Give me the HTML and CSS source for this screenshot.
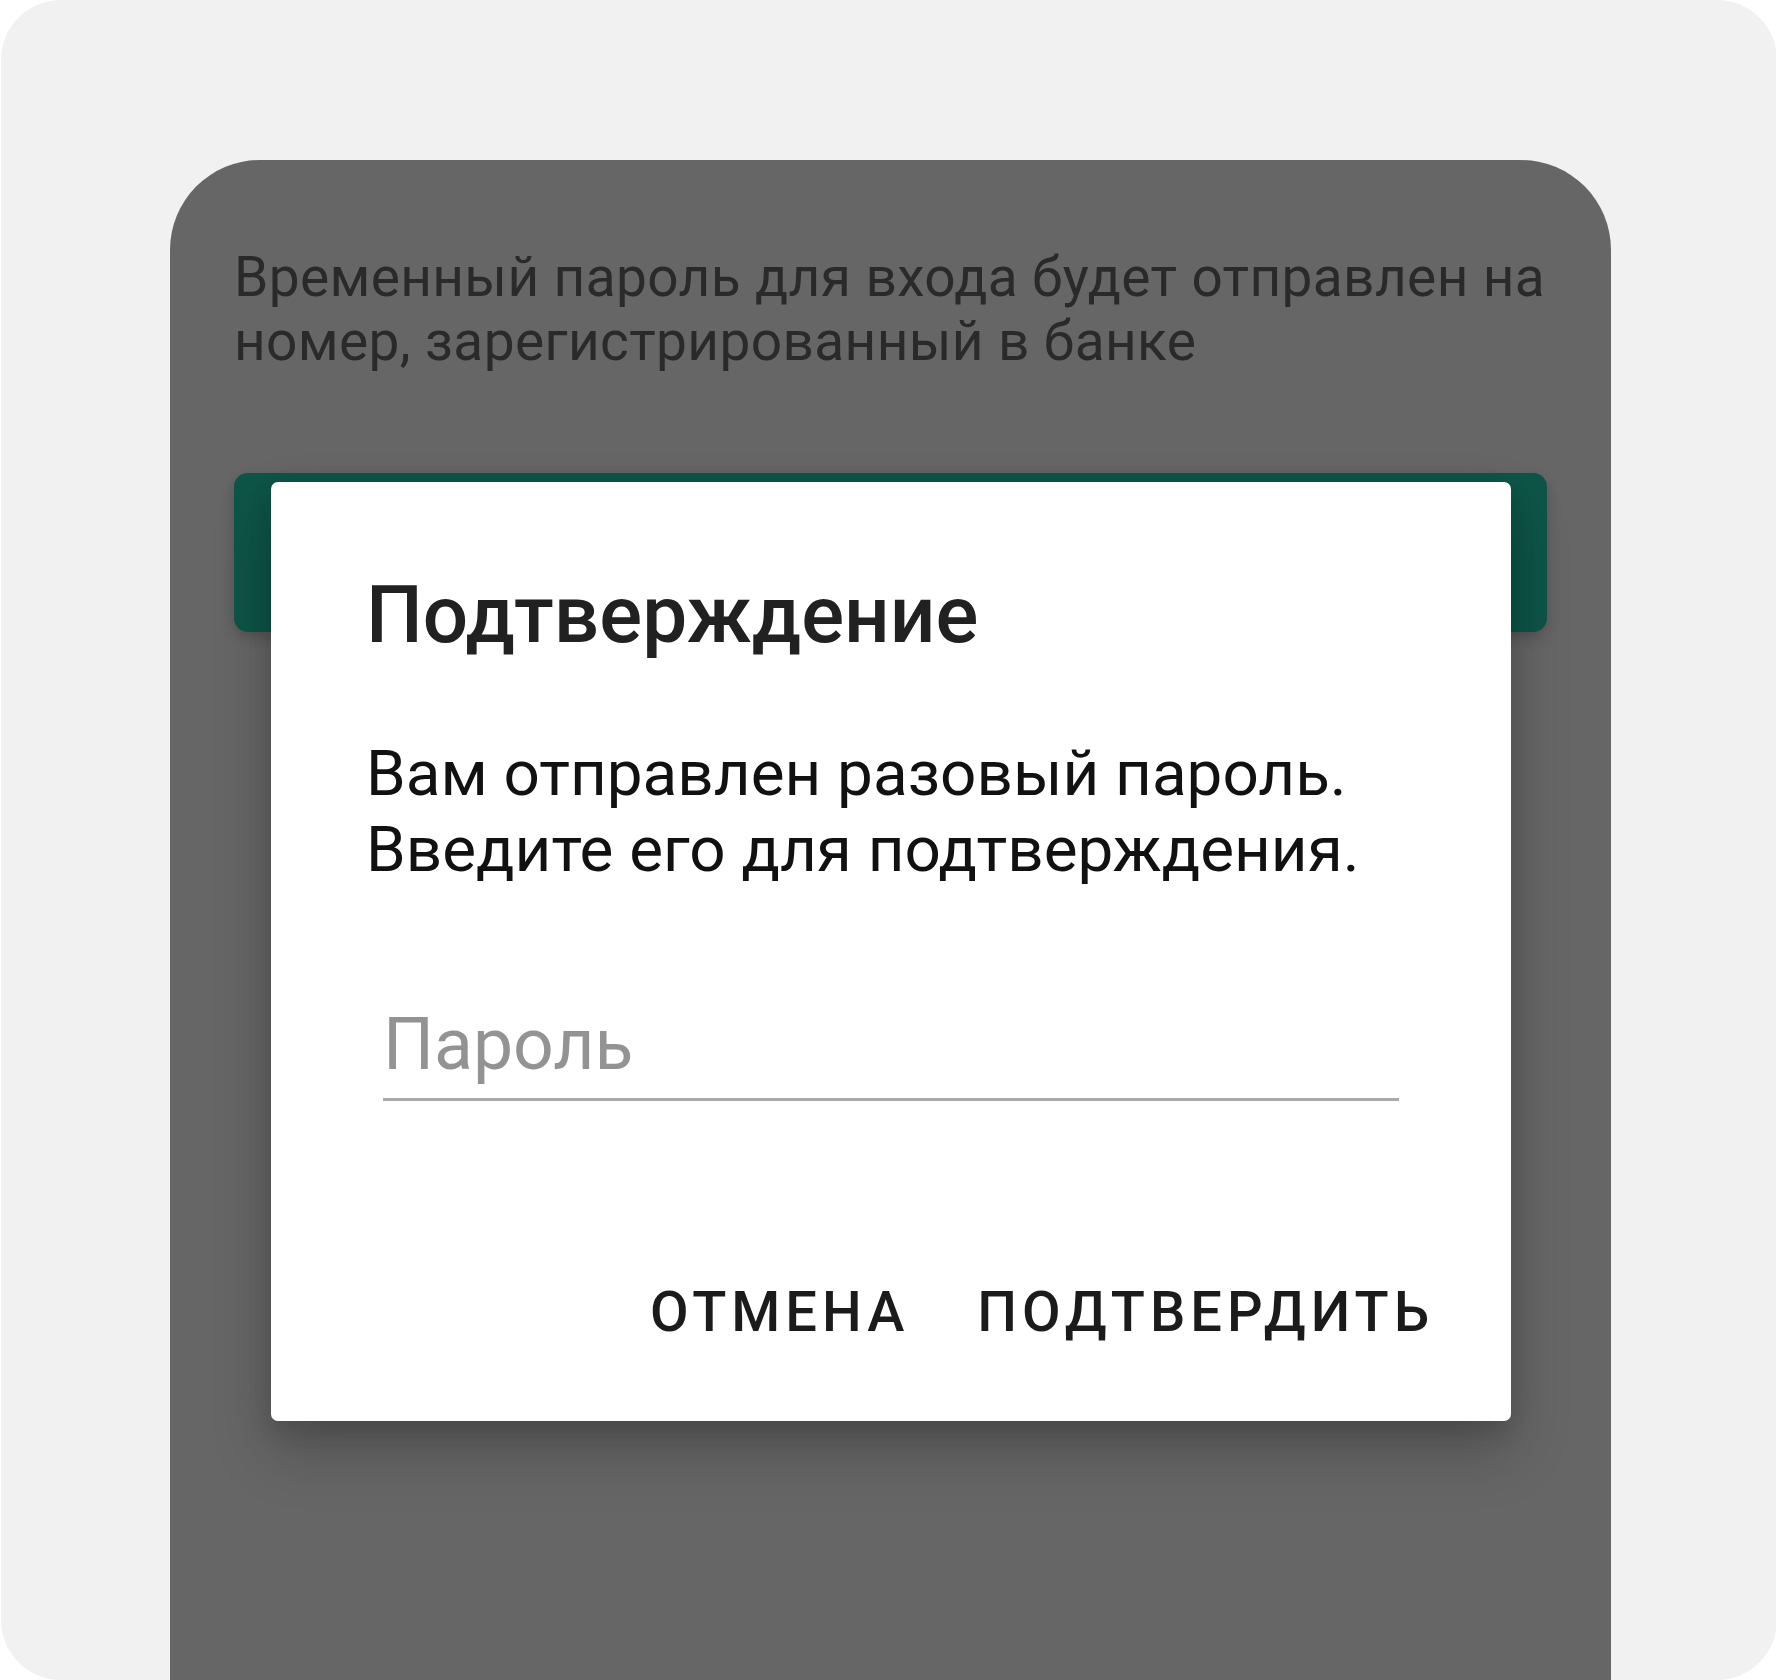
FILE: index.html
```html
<!DOCTYPE html>
<html lang="ru">
<head>
<meta charset="utf-8">
<title>Подтверждение</title>
<link rel="stylesheet" href="styles.css">
</head>
<body>
<div class="frame">
  <div class="panel">
    <p class="panel-text">Временный пароль для входа будет отправлен на номер, зарегистрированный в банке</p>
    <div class="green-btn"></div>
  </div>
  <div class="dialog">
    <h1 class="dialog-title">Подтверждение</h1>
    <p class="dialog-body">Вам отправлен разовый пароль.<br>Введите его для подтверждения.</p>
    <div class="field"><span class="placeholder">Пароль</span></div>
    <div class="actions">
      <span class="action">Отмена</span>
      <span class="action">Подтвердить</span>
    </div>
  </div>
</div>
</body>
</html>
```
FILE: styles.css
```css
* { box-sizing: border-box; }
html, body { margin: 0; padding: 0; background: #ffffff; }
body { font-family: Roboto, "Noto Sans", sans-serif; }

.frame {
  position: relative;
  width: 1776px;
  height: 1680px;
  margin-left: 1px;
  background: #f1f1f1;
  border-radius: 60px;
  padding: 160px 166px 0 169px;
  overflow: hidden;
}

.panel {
  height: 1520px;
  background: #666666;
  border-radius: 90px 90px 0 0;
  padding: 85px 64px 0 64px;
}

.panel-text {
  margin: 0;
  font-size: 55px;
  line-height: 64px;
  color: #2a2a2a;
  letter-spacing: 0.38px;
}

.green-btn {
  margin-top: 100px;
  height: 159px;
  background: #0e5447;
  border-radius: 14px;
  box-shadow: 0 6px 14px rgba(0, 0, 0, 0.18);
}

.dialog {
  position: absolute;
  left: 270px;
  top: 482px;
  width: 1240px;
  height: 939px;
  background: #ffffff;
  border-radius: 7px;
  padding: 86px 95px 0 95px;
  box-shadow: 0 30px 60px rgba(0, 0, 0, 0.22), 0 10px 24px rgba(0, 0, 0, 0.12);
}

.dialog-title {
  margin: 0;
  font-size: 80px;
  line-height: 94px;
  font-weight: 500;
  color: #212121;
}

.dialog-body {
  margin: 74px 0 0 0;
  font-size: 63.8px;
  line-height: 76px;
  color: #111111;
}

.field {
  margin: 114px 17px 0 17px;
  padding-bottom: 10px;
  border-bottom: 3px solid #a9a9a9;
  font-size: 71.5px;
  line-height: 86px;
}

.placeholder { color: #939393; }

.actions {
  margin: 178px -18px 0 0;
  display: flex;
  justify-content: flex-end;
  gap: 68px;
}

.action {
  font-size: 56px;
  line-height: 66px;
  font-weight: 500;
  text-transform: uppercase;
  letter-spacing: 5px;
  color: #1b1b1b;
}
```
